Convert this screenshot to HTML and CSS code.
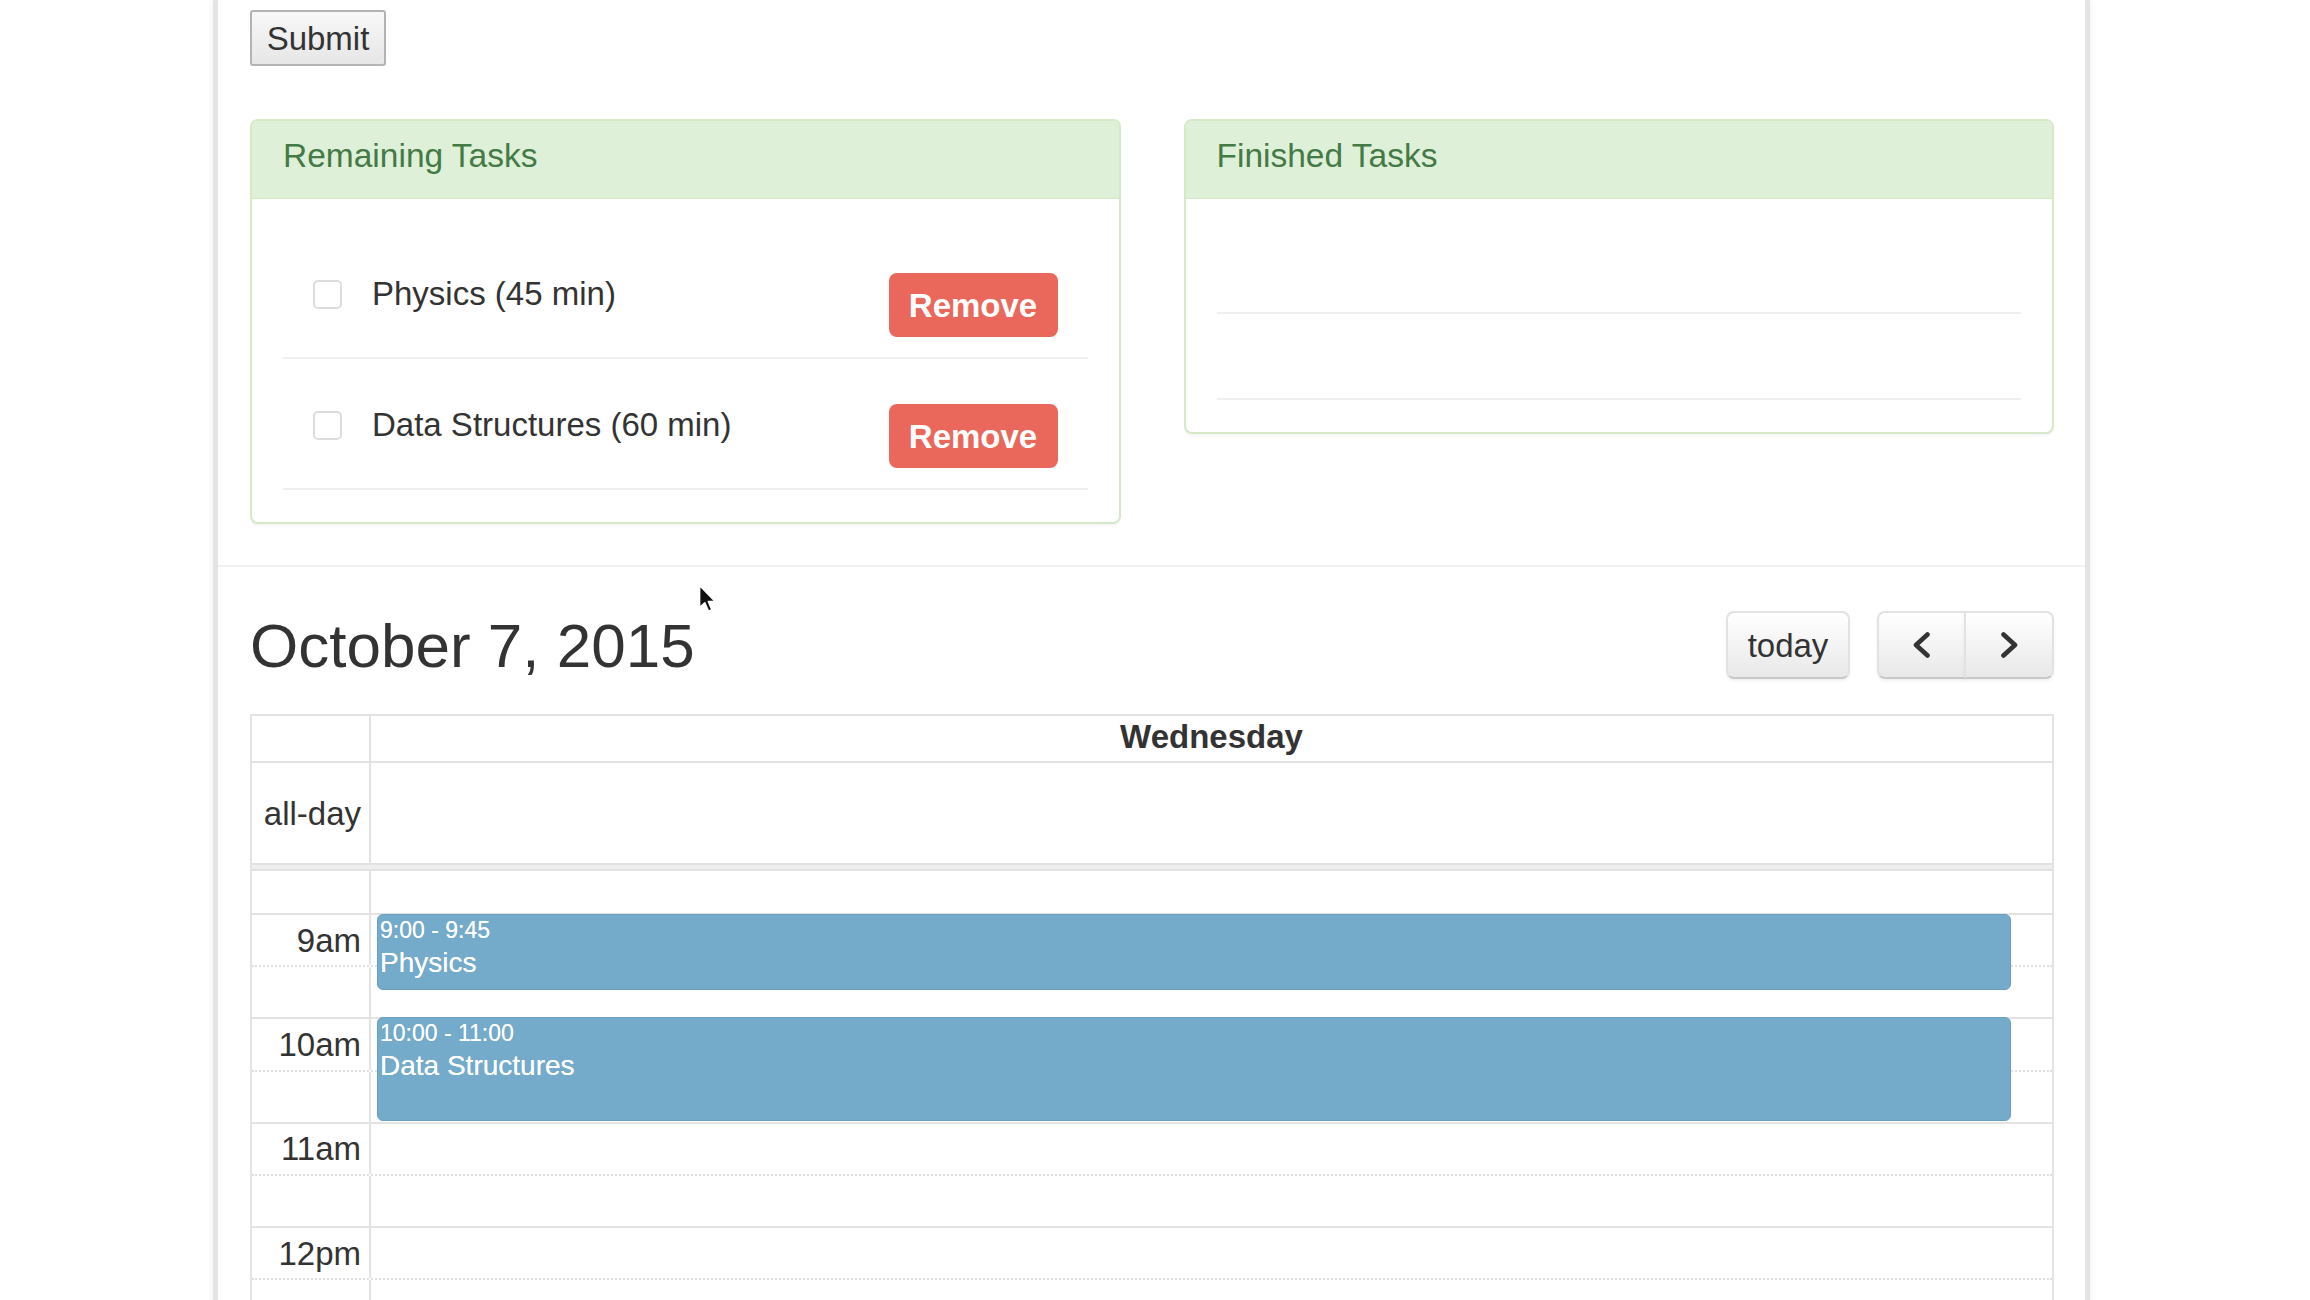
FILE: index.html
```html
<!DOCTYPE html>
<html lang="en">
<head>
<meta charset="utf-8">
<title>Tasks</title>
<link rel="stylesheet" href="styles.css">
</head>
<body>
<div class="page">
  <section class="top">
    <button class="submit" type="button">Submit</button>
    <div class="panels">
      <div class="panel">
        <div class="panel-heading"><h3 class="panel-title">Remaining Tasks</h3></div>
        <div class="panel-body">
          <div class="task">
            <input class="task-check" type="checkbox">
            <span class="task-label">Physics (45 min)</span>
            <button class="remove" type="button">Remove</button>
          </div>
          <div class="task">
            <input class="task-check" type="checkbox">
            <span class="task-label">Data Structures (60 min)</span>
            <button class="remove" type="button">Remove</button>
          </div>
        </div>
      </div>
      <div class="panel">
        <div class="panel-heading"><h3 class="panel-title">Finished Tasks</h3></div>
        <div class="panel-body">
          <div class="task empty"></div>
          <div class="task empty"></div>
        </div>
      </div>
    </div>
  </section>

  <section class="calendar">
    <div class="toolbar">
      <h2 class="cal-title">October 7, 2015</h2>
      <div class="cal-buttons">
        <button class="fc-btn today" type="button">today</button>
        <div class="btn-group">
          <button class="fc-btn prev" type="button" aria-label="prev">
            <svg width="22" height="26" viewBox="0 0 22 26"><polyline points="16.5,2.5 5,13 16.5,23.5" fill="none" stroke="#333" stroke-width="4.6" stroke-linecap="round" stroke-linejoin="round"/></svg>
          </button>
          <button class="fc-btn next" type="button" aria-label="next">
            <svg width="22" height="26" viewBox="0 0 22 26"><polyline points="5.5,2.5 17,13 5.5,23.5" fill="none" stroke="#333" stroke-width="4.6" stroke-linecap="round" stroke-linejoin="round"/></svg>
          </button>
        </div>
      </div>
    </div>

    <div class="cal-table">
      <div class="row head">
        <div class="axis"></div>
        <div class="day-head">Wednesday</div>
      </div>
      <div class="row allday">
        <div class="axis">all-day</div>
        <div class="cell"></div>
      </div>
      <div class="divider"></div>
      <div class="timegrid">
        <div class="row slot partial"><div class="axis"></div><div class="cell"></div></div>
        <div class="row slot hour"><div class="axis">9am</div><div class="cell"></div></div>
        <div class="row slot minor"><div class="axis"></div><div class="cell"></div></div>
        <div class="row slot hour"><div class="axis">10am</div><div class="cell"></div></div>
        <div class="row slot minor"><div class="axis"></div><div class="cell"></div></div>
        <div class="row slot hour"><div class="axis">11am</div><div class="cell"></div></div>
        <div class="row slot minor"><div class="axis"></div><div class="cell"></div></div>
        <div class="row slot hour"><div class="axis">12pm</div><div class="cell"></div></div>
        <div class="row slot minor"><div class="axis"></div><div class="cell"></div></div>

        <div class="event" style="top:43px;height:76px;">
          <div class="event-time">9:00 - 9:45</div>
          <div class="event-title">Physics</div>
        </div>
        <div class="event" style="top:146px;height:104px;">
          <div class="event-time">10:00 - 11:00</div>
          <div class="event-title">Data Structures</div>
        </div>
      </div>
    </div>
  </section>
</div>

<svg class="cursor" width="20" height="29" viewBox="0 0 13 19">
  <polygon points="1,1 1,15.5 4.4,12.3 6.8,17.8 9,16.9 6.7,11.5 11.2,11.5" fill="#111" stroke="#fff" stroke-width="1" stroke-linejoin="round"/>
</svg>
</body>
</html>
```

FILE: styles.css
```css
* {
  box-sizing: border-box;
}

html,
body {
  margin: 0;
  padding: 0;
  background: #ffffff;
}

body {
  position: relative;
  height: 1300px;
  overflow: hidden;
  font-family: "Liberation Sans", Arial, Helvetica, sans-serif;
  color: #333333;
}

button {
  font-family: "Liberation Sans", Arial, Helvetica, sans-serif;
  cursor: default;
}

.page {
  margin-left: 213px;
  width: 1877px;
  min-height: 1300px;
  background: #ffffff;
  border-left: 5px solid #e4e4e4;
  border-right: 5px solid #e4e4e4;
  box-shadow: 0 0 7px rgba(0, 0, 0, 0.07);
}

/* ---------- top section ---------- */
.top {
  padding: 10px 31px 41px 32px;
}

.submit {
  display: block;
  width: 136px;
  height: 56px;
  padding: 0;
  font-size: 33px;
  line-height: 1;
  color: #333333;
  background: linear-gradient(#f8f8f8, #e6e6e6);
  border: 2px solid #b3b3b3;
  border-radius: 3px;
}

.panels {
  margin-top: 53px;
  display: grid;
  grid-template-columns: 1fr 1fr;
  column-gap: 63px;
  align-items: start;
}

.panel {
  background: #ffffff;
  border: 2px solid #d6e9c6;
  border-radius: 8px;
  box-shadow: 0 2px 2px rgba(0, 0, 0, 0.04);
  overflow: hidden;
}

.panel-heading {
  background: #dff0d8;
  border-bottom: 1px solid #d6e9c6;
  padding: 17px 31px 24px;
}

.panel-title {
  margin: 0;
  font-size: 33.5px;
  line-height: 36px;
  font-weight: normal;
  color: #447a45;
}

.panel-body {
  padding: 29px 31px 32px;
}

.task {
  display: flex;
  align-items: flex-start;
  height: 131px;
  padding: 45px 30px 0 30px;
  border-bottom: 2px solid #efefef;
}

.task.empty {
  height: 86px;
  padding: 0;
}

.task-check {
  appearance: none;
  -webkit-appearance: none;
  flex: none;
  width: 29px;
  height: 29px;
  margin: 7px 0 0 0;
  background: #ffffff;
  border: 2px solid #dcdcdc;
  border-radius: 5px;
}

.task-label {
  flex: 1;
  margin: 3px 0 0 30px;
  font-size: 33px;
  line-height: 36px;
  color: #333333;
}

.remove {
  flex: none;
  width: 169px;
  height: 64px;
  padding: 0;
  font-size: 33px;
  font-weight: bold;
  line-height: 1;
  color: #ffffff;
  background: #e9685b;
  border: none;
  border-radius: 8px;
}

/* ---------- calendar ---------- */
.calendar {
  border-top: 2px solid #f1f1f1;
  padding: 44px 31px 0 32px;
}

.toolbar {
  display: flex;
  justify-content: space-between;
  align-items: center;
  height: 68px;
  margin-bottom: 35px;
}

.cal-title {
  margin: 0;
  font-size: 62px;
  line-height: 63px;
  font-weight: normal;
  color: #333333;
}

.cal-buttons {
  display: flex;
  align-items: center;
  gap: 27px;
}

.btn-group {
  display: flex;
}

.fc-btn {
  display: flex;
  align-items: center;
  justify-content: center;
  height: 68px;
  padding: 0;
  font-size: 33px;
  line-height: 1;
  color: #333333;
  background: linear-gradient(#ffffff, #e8e8e8);
  border: 2px solid #e2e2e2;
  border-bottom-color: #c8c8c8;
  border-radius: 8px;
  box-shadow: inset 0 2px 0 rgba(255, 255, 255, 0.3), 0 2px 3px rgba(0, 0, 0, 0.06);
}

.today {
  width: 124px;
}

.prev {
  width: 89px;
  border-top-right-radius: 0;
  border-bottom-right-radius: 0;
}

.next {
  width: 90px;
  margin-left: -2px;
  border-top-left-radius: 0;
  border-bottom-left-radius: 0;
}

.cal-table {
  border: 2px solid #e3e3e3;
  border-bottom: none;
}

.row {
  display: grid;
  grid-template-columns: 119px 1fr;
}

.axis {
  display: flex;
  align-items: center;
  justify-content: flex-end;
  padding-right: 8px;
  border-right: 2px solid #e3e3e3;
  font-size: 33px;
  line-height: 1;
  color: #333333;
  white-space: nowrap;
}

.head {
  height: 47px;
  border-bottom: 2px solid #e3e3e3;
}

.day-head {
  text-align: center;
  font-size: 33px;
  font-weight: bold;
  line-height: 41px;
  padding-bottom: 4px;
}

.allday {
  height: 100px;
}

.divider {
  height: 8px;
  background: #eeeeee;
  border-top: 2px solid #e2e2e2;
  border-bottom: 2px solid #e2e2e2;
}

.timegrid {
  position: relative;
}

.slot {
  height: 52.2px;
}

.slot.partial {
  height: 42px;
}

.slot.hour {
  border-top: 2px solid #e3e3e3;
}

.slot.minor {
  border-top: 2px dotted #e0e0e0;
}

.event {
  position: absolute;
  left: 125px;
  right: 41px;
  padding: 1px 2px;
  color: #ffffff;
  background: #74aaca;
  border: 1px solid #6a9fc0;
  border-radius: 6px;
  overflow: hidden;
  text-shadow: 0 0 0.6px rgba(255, 255, 255, 0.9);
}

.event-time {
  font-size: 23px;
  line-height: 28px;
  white-space: nowrap;
}

.event-title {
  font-size: 28px;
  line-height: 38px;
  white-space: nowrap;
}

.cursor {
  position: absolute;
  left: 698px;
  top: 584px;
}
```
